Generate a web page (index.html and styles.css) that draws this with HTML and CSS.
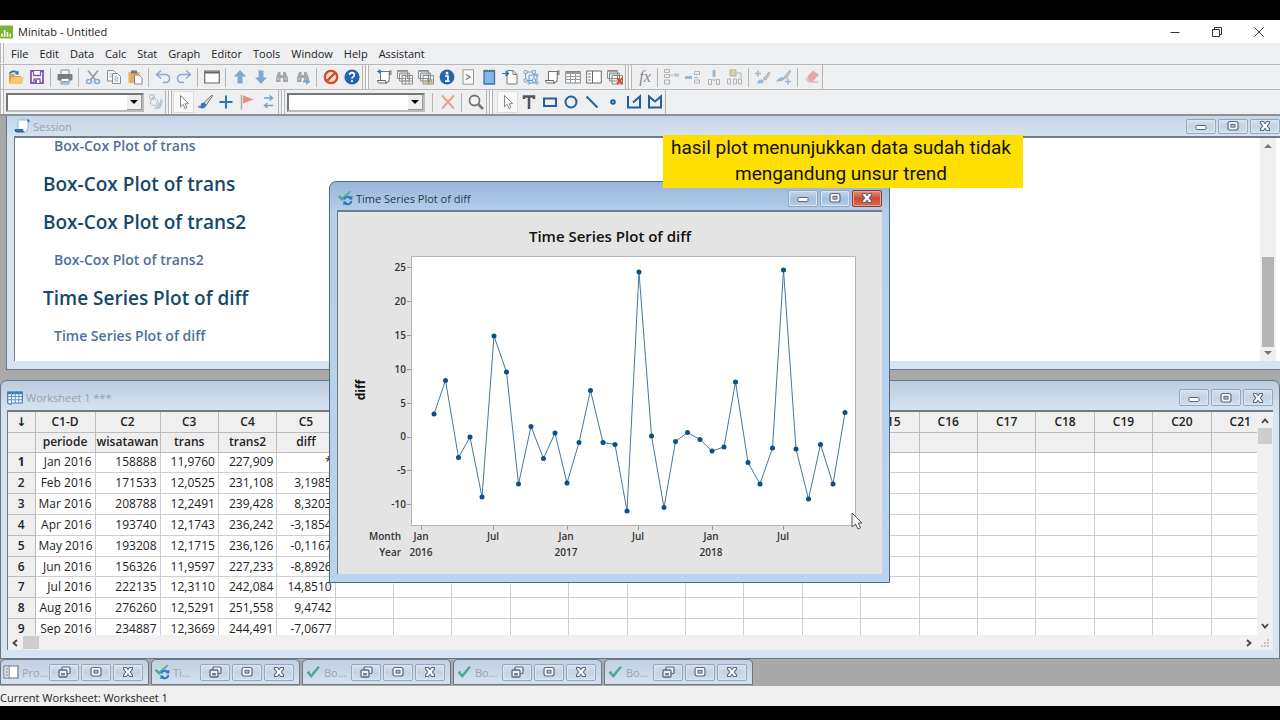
FILE: index.html
```html
<!DOCTYPE html>
<html lang="en">
  <head>
    <meta charset="UTF-8" />
    <meta name="viewport" content="width=device-width, initial-scale=1.0" />
    <title>Minitab - Untitled</title>
    <link rel="stylesheet" href="styles.css">
  </head>
  <body>
    <svg class="sprite" aria-hidden="true">
      <symbol id="i-min" viewBox="0 0 16 12"><rect x="3" y="5.500" width="10" height="4" rx="1" fill="#fff" stroke="#5c6779" /></symbol>
      <symbol id="i-max" viewBox="0 0 16 12"><rect x="3" y="1.500" width="10" height="8.500" rx="2" fill="#f4f7fb" stroke="#5c6779" stroke-width="1.200" /><rect x="6" y="4.300" width="4" height="2.800" fill="#b4bfcd" stroke="#5c6779" /></symbol>
      <symbol id="i-close" viewBox="0 0 16 12"><path d="M3.500 1.500h3L8 3.600l1.500-2.100h3v1.600L10.200 6l2.300 2.800v1.700h-3L8 8.200l-1.500 2.300h-3V8.800L5.800 6 3.500 3.100z" fill="#fff" stroke="#5c6779" stroke-width="1.100" stroke-linejoin="round" /></symbol>
      <symbol id="i-restore" viewBox="0 0 16 12"><rect x="6" y="1" width="8" height="6.500" rx="1" fill="#e9eff6" stroke="#5c6779" stroke-width="1.200" /><rect x="3" y="4" width="8" height="7" rx="1" fill="#e9eff6" stroke="#5c6779" stroke-width="1.300" /><path d="M5.500 7.500h3v1.500h-3z" fill="#8d99a9" stroke="#5c6779" stroke-width=".8" /></symbol>
      <symbol id="i-check" viewBox="0 0 16 16"><path d="M1.500 8.500 4 6.800l2 3.400L13 2l2 1.200L6.300 14z" fill="#4fa697" /></symbol>
      <symbol id="i-plot" viewBox="0 0 16 16"><path d="M.5 6.500 3 5l2 2.600L13 .8l1.200 1L5 11z" fill="#5aaa8e" /><path d="M7.200 9.500A4 4 0 0 1 14 8.200M14.500 11a4 4 0 0 1-6.800 2" fill="none" stroke="#2878c4" stroke-width="1.900" /><path d="m15.500 5.500-.3 4.200-3.800-.8zM6.300 15.200l.2-4.200 3.700 1.200z" fill="#2878c4" /></symbol>
      <symbol id="i-scroll" viewBox="0 0 16 16"><path d="M4 2.500h9V12H4z" fill="#fff" /><path d="M13.500 5.500V3q0-1.300 1.400-1.300V5.500zM4.500 11.500v-9h8.700v8.300q0 2.500-2.500 2.500" fill="none" stroke="#777" stroke-width="1.100" /><path d="M1.500 11.500h8q-.5 2.500 1.500 2.500H3.500q-2 0-2-2.500z" fill="#fff" stroke="#666" /></symbol>
      <symbol id="i-arrow" viewBox="0 0 16 16"><path d="M4.500 1.500v11.300l2.700-2.500 1.700 4.200 2-.8-1.800-4h3.500z" fill="#fff" stroke="#858585" /></symbol>
      <symbol id="i-glass" viewBox="0 0 16 16"><path d="M2 13V9l2-6h2.500v10zM9 13V3h2.500L14 9v4zM6.500 6H9v3H6.500z" fill="#a4a7aa" /><path d="M3 10h2M10.500 10h2" stroke="#ddd" /></symbol>
      <symbol id="i-sheets" viewBox="0 0 16 16"><g fill="#f5f5f5" stroke="#8b8b8b"><path d="M.5 1.500h10v8H.5zM2.500 4h10v8h-10zM5 6.500h10.500v8.500H5z" /></g><path d="M.5 2.500h10M2.500 5h10" stroke="#a5a5a5" /></symbol>
    </svg>

    <header class="app-title">
      <svg class="logo" viewBox="0 0 14 14"><rect width="14" height="14" rx="1" fill="#7cb337" /><path d="M2 9v3M5 5v7M8 7v5M11 9v3" stroke="#fff" stroke-width="1.800" /></svg>
      <h1>Minitab - Untitled</h1>
      <div class="app-controls">
        <button aria-label="Minimize"><svg viewBox="0 0 12 12"><path d="M1.500 6.500h9" /></svg></button>
        <button aria-label="Restore"><svg viewBox="0 0 12 12"><path d="M1.500 3.500h7v7h-7zM3.500 3.500v-2h7v7h-2" /></svg></button>
        <button aria-label="Close"><svg viewBox="0 0 12 12"><path d="m1.500 1.500 9 9m0-9-9 9" /></svg></button>
      </div>
    </header>

    <nav class="menubar" aria-label="Main menu">
      <span class="grip"></span>
      <button>File</button>
      <button>Edit</button>
      <button>Data</button>
      <button>Calc</button>
      <button>Stat</button>
      <button>Graph</button>
      <button>Editor</button>
      <button>Tools</button>
      <button>Window</button>
      <button>Help</button>
      <button>Assistant</button>
    </nav>

    <div class="toolbars">
      <div class="toolbar" role="toolbar" aria-label="Standard">
        <span class="grip"></span>
        <button aria-label="Open"><svg viewBox="0 0 16 16"><path d="M1 14V5h5l1 2h6v7z" fill="#dba24c" /><path d="m1 15 3-7h12l-2 7z" fill="#f7c777" /><path d="M1.500 4.500Q5 .5 9 3.500" fill="none" stroke="#3175ae" stroke-width="1.800" /><path d="m10.500 1.500.2 4.200-4-.8z" fill="#3175ae" /></svg></button>
        <button aria-label="Save"><svg viewBox="0 0 16 16"><path d="M2 2h12v12H2z" fill="#fff" stroke="#8058a8" stroke-width="1.800" /><path d="M4.500 2v4.500h7V2M5 14v-4h6v4" fill="#fff" stroke="#8058a8" stroke-width="1.300" /><path d="M6 11h2v3H6z" fill="#8058a8" /></svg></button>
        <span class="sep"></span>
        <button aria-label="Print"><svg viewBox="0 0 16 16"><path d="M4 5V1h8v4" fill="#f9f9f9" stroke="#888" /><rect x=".5" y="5" width="15" height="6.500" rx="1" fill="#777c83" /><path d="M4 9.500h8V15H4z" fill="#fff" stroke="#888" /><path d="M5 13h6M12 7h2" stroke="#4d91cf" stroke-width="1.500" /></svg></button>
        <span class="sep"></span>
        <button aria-label="Cut"><svg viewBox="0 0 16 16"><path d="m3 1.500 7.500 9.500M13 1.500 5.500 11" stroke="#9a9da2" stroke-width="1.700" /><g fill="none" stroke="#88abcf" stroke-width="1.600"><ellipse cx="4" cy="12.500" rx="2.500" ry="2" /><ellipse cx="12" cy="12.500" rx="2.500" ry="2" /></g></svg></button>
        <button aria-label="Copy"><svg viewBox="0 0 16 16"><path d="M1.500 1.500h6l2 2V12h-8z" fill="#f8f8f8" stroke="#929292" /><path d="M3.500 5h3M3.500 7.500h2" stroke="#91b3d7" /><path d="M6.500 4.500h5l3 3v7h-8z" fill="#fff" stroke="#8a8d92" /><path d="M8.500 8h4M8.500 10h4M8.500 12h4" stroke="#7fa8d3" /></svg></button>
        <button aria-label="Paste"><svg viewBox="0 0 16 16"><path d="M1.500 3h11v11h-11z" fill="#e8ae5b" /><path d="M4 1.500h6v3H4z" fill="#777" /><path d="M7.500 6h4.500l3 3v6H7.500z" fill="#fff" stroke="#858585" /></svg></button>
        <span class="sep"></span>
        <button aria-label="Undo"><svg viewBox="0 0 16 16"><path d="M6 1.500 1.500 5.500 6 9.500M2 5.500h8q4.500 0 4.500 4t-4.500 4H8" fill="none" stroke="#88acd3" stroke-width="1.500" /></svg></button>
        <button aria-label="Redo"><svg viewBox="0 0 16 16"><path d="m10 1.500 4.500 4-4.500 4M14 5.500H6q-4.500 0-4.500 4t4.500 4h2" fill="none" stroke="#88acd3" stroke-width="1.500" /></svg></button>
        <span class="sep"></span>
        <button aria-label="Show dialog"><svg viewBox="0 0 16 16"><path d="M.7 2h14.600v12H.7z" fill="#fdfdfd" stroke="#666" stroke-width="1.200" /><path d="M1 3.500h14" stroke="#666" stroke-width="2" /></svg></button>
        <span class="sep"></span>
        <button aria-label="Previous command"><svg viewBox="0 0 16 16"><path d="M8 1 2 7.500h3.500v7h5v-7H14z" fill="#7da7d4" /></svg></button>
        <button aria-label="Next command"><svg viewBox="0 0 16 16"><path d="m8 15 6-6.500h-3.500v-7h-5v7H2z" fill="#7da7d4" /></svg></button>
        <button aria-label="Find"><svg><use href="#i-glass" /></svg></button>
        <button aria-label="Find next"><svg viewBox="0 0 16 16"><use href="#i-glass" /><path d="M8 11.500h3V9l4.500 3.500L11 16v-2.500H8z" fill="#7ea6ce" /></svg></button>
        <span class="sep"></span>
        <button aria-label="Cancel"><svg viewBox="0 0 16 16"><circle cx="8" cy="8" r="6.200" fill="#f9ded5" stroke="#d94a28" stroke-width="2.300" /><path d="m3.600 12.400 8.800-8.800" stroke="#d94a28" stroke-width="2.200" /></svg></button>
        <button aria-label="Help"><svg viewBox="0 0 16 16"><circle cx="8" cy="8" r="7.600" fill="#2466a9" /><path d="M5.600 6q0-2.400 2.400-2.400T10.400 6q0 1.200-1.400 1.900Q8 8.400 8 9.700" fill="none" stroke="#fff" stroke-width="1.600" /><circle cx="8" cy="12" r="1.100" fill="#fff" /></svg></button>
      </div>
      <div class="toolbar" role="toolbar" aria-label="Project manager">
        <span class="grip"></span>
        <button aria-label="Show session folder"><svg viewBox="0 0 16 16"><use href="#i-scroll" /><path d="M1 2.500h3M3 .8 5.200 2.500 3 4.200z" fill="#2872b5" stroke="#2872b5" /></svg></button>
        <button aria-label="Show worksheets folder"><svg viewBox="0 0 16 16"><use href="#i-sheets" /><path d="M5 9.500h10.500M5 12h10.500M8.500 6.500V15M12 6.500V15" stroke="#9b9b9b" /></svg></button>
        <button aria-label="Show graphs folder"><svg viewBox="0 0 16 16"><use href="#i-sheets" /><path d="M7.500 14.500V11M13.500 14.500V10" stroke="#e0a43c" stroke-width="2" /><path d="M10.500 14.500V8.500" stroke="#4f91cd" stroke-width="2" /></svg></button>
        <button aria-label="Show info"><svg viewBox="0 0 16 16"><circle cx="8" cy="8" r="7.400" fill="#2466a9" /><circle cx="8" cy="4.200" r="1.400" fill="#fff" /><path d="M6 7h3v5M6 12.200h4.500" fill="none" stroke="#fff" stroke-width="1.700" /></svg></button>
        <button aria-label="Show history"><svg viewBox="0 0 16 16"><path d="M3 .8h10.500v14.400H3z" fill="#f8f8f8" stroke="#979797" /><path d="m6 5.500 4 2.500-4 2.500" fill="none" stroke="#777" stroke-width="1.200" /></svg></button>
        <button aria-label="Show report pad"><svg viewBox="0 0 16 16"><path d="M3 2h10.500v13H3z" fill="#80b6ea" stroke="#3972a8" stroke-width="1.300" /><path d="M3 1.800h11" stroke="#5d6873" stroke-width="2" stroke-dasharray="1.500 1" /></svg></button>
        <button aria-label="Related documents"><svg viewBox="0 0 16 16"><path d="M5 1.500h6l4 4v9.500H5z" fill="#fff" stroke="#777" /><path d="M11 1.500v4h4" fill="none" stroke="#777" /><path d="M0 4.500h4M4 2l3 2.500L4 7z" fill="#2872b5" stroke="#2872b5" /></svg></button>
        <button aria-label="Show design"><svg viewBox="0 0 16 16"><path d="M2.500 3h8.500v8.500H2.500zM6 6h8v8H6z" fill="none" stroke="#6d9cc9" /><path d="M1 1.500h3v3H1zM9.500 1.500h3v3h-3zM1 10h3v3H1zM9.500 10h3v3h-3zM13 5h2v2h-2zM13 13h2v2h-2zM5 13h2v2H5z" fill="#e5eef7" stroke="#7b9cbc" stroke-width=".8" /></svg></button>
        <button aria-label="Session window"><svg><use href="#i-scroll" /></svg></button>
        <button aria-label="Current data window"><svg viewBox="0 0 16 16"><path d="M.7 2.500h14.600v11.500H.7z" fill="#fff" stroke="#858585" /><path d="M.7 4h14.600" stroke="#999" stroke-width="2" /><path d="M.7 7.500h14.600M.7 10.500h14.600M5.500 3v11M10.500 3v11" stroke="#999" /></svg></button>
        <button aria-label="Project manager"><svg viewBox="0 0 16 16"><path d="M.7 2h14.600v12H.7zM6.500 2v12" fill="#fff" stroke="#666" /><path d="M2.500 5h2M2.500 8h2M2.500 11h2" stroke="#888" stroke-width="1.500" /></svg></button>
        <button aria-label="Close all graphs"><svg viewBox="0 0 16 16"><use href="#i-sheets" /><path d="m10 9 5.500 6m0-6L10 15" stroke="#d7472d" stroke-width="1.900" /></svg></button>
      </div>
      <div class="toolbar" role="toolbar" aria-label="Worksheet">
        <span class="grip"></span>
        <button class="fx" aria-label="Assign formula">fx</button>
        <span class="sep"></span>
        <button class="off" aria-label="Insert cells"><svg viewBox="0 0 16 16"><path d="M.5.500h5v3h-5zM.5 5.500h5v3h-5zM.5 11h5v4h-5z" fill="#eee" stroke="#777" /><path d="M6 6h3" stroke="#5b89b4" /><path d="M10 4.500h5v3h-5z" fill="#999" /></svg></button>
        <button class="off" aria-label="Insert rows"><svg viewBox="0 0 16 16"><path d="M0 7h7v3H0z" fill="#4685bb" /><path d="M9.500 2.500h5v3h-5zM9.500 11h5v3h-5zM9 8.500h4" fill="#eee" stroke="#777" /></svg></button>
        <button class="off" aria-label="Insert columns"><svg viewBox="0 0 16 16"><path d="M6.500 1h3v7h-3z" fill="#4685bb" /><path d="M2.500 10.500h3v5h-3zM10.500 10.500h3v5h-3zM6.500 9.500 8 12l1.500-2.500" fill="#eee" stroke="#777" /></svg></button>
        <button class="off" aria-label="Move columns"><svg viewBox="0 0 16 16"><path d="M3 1h6v6H3z" fill="#c8b34e" stroke="#777" /><path d="M.5 10h3v5h-3zM6.500 10h3v5h-3zM11.500 10h3v5h-3zM10 4h4v5" fill="none" stroke="#777" /></svg></button>
        <span class="sep"></span>
        <button class="off" aria-label="Previous brush group"><svg viewBox="0 0 16 16"><path d="m8 10 6-7 1 1-4 7z" fill="#999" stroke="#777" /><path d="M2 14.500q1-4.500 5-4l2 1.500q0 3-7 2.500z" fill="#4685bb" /><path d="M0 4.500h6M3 1.500v6" stroke="#4685bb" stroke-width="1.500" /></svg></button>
        <button class="off" aria-label="Next brush group"><svg viewBox="0 0 16 16"><path d="m8 8 6-7 1 1-5 8z" fill="#999" stroke="#777" /><path d="M0 12.500q3-4.500 7-4.500l2 2q-3 3-9 2.500z" fill="#4685bb" /><path d="M9 12.500h6M12 9.500v6" stroke="#4685bb" stroke-width="1.500" /></svg></button>
        <span class="sep"></span>
        <button class="off" aria-label="Clear cells"><svg viewBox="0 0 16 16"><path d="m3 8 6-6.500 6 4L9 12H5z" fill="#e45d68" /><path d="m1.500 9.500 4 3.500H14" fill="none" stroke="#e17b82" stroke-width="1.500" /></svg></button>
      </div>
    </div>

    <div class="toolbars">
      <div class="toolbar" role="toolbar" aria-label="Graph editing">
        <span class="grip"></span>
        <label class="combo"><select aria-label="Graph item"><option></option></select><svg viewBox="0 0 8 4"><path d="M0 0h8L4 4z" /></svg></label>
        <button class="off" aria-label="Edit attributes"><svg viewBox="0 0 16 16"><path d="m6 3 5 4-3 5.500L3 9z" fill="#f2f2f2" stroke="#888" /><circle cx="5" cy="3" r="2.500" fill="none" stroke="#888" /><path d="M11 9q3 0 2-4l2.500 1q.5 7-4 9H6q4-1 5-6z" fill="#7fa6c8" /></svg></button>
      </div>
      <div class="toolbar" role="toolbar" aria-label="Selection">
        <span class="grip short"></span>
        <button class="pressed" aria-label="Select"><svg><use href="#i-arrow" /></svg></button>
        <button aria-label="Brush"><svg viewBox="0 0 16 16"><path d="M6.500 9 15 1l.5 1L9 11.500z" fill="#d7dce1" stroke="#777" /><path d="M1 13q3 0 3-3.500L7 8.500 9.500 11 8 13.500q-3 2-7-.5z" fill="#2e79bd" /><path d="m0 13 3-1.500.5 2z" fill="#e26a3d" /></svg></button>
        <button aria-label="Crosshairs"><svg viewBox="0 0 16 16"><path d="M8 1.500v13M1.500 8h13" stroke="#2a74b8" stroke-width="2" /></svg></button>
        <button aria-label="Plant flag"><svg viewBox="0 0 16 16"><path d="M2.500 1v14.500" stroke="#aaa" stroke-width="1.500" /><path d="m4 1.500 10.500 4L4 9.500z" fill="#e99083" /></svg></button>
        <button aria-label="Update"><svg viewBox="0 0 16 16"><g fill="none" stroke="#78a3cc" stroke-width="1.500"><path d="M4 4h8M9.500 1.500 12.500 4l-3 2.500M13 11.500H5M7.500 9l-3 2.500 3 2.500" /></g></svg></button>
      </div>
      <div class="toolbar" role="toolbar" aria-label="Annotation list">
        <span class="grip short"></span>
        <label class="combo"><select aria-label="Annotation item"><option></option></select><svg viewBox="0 0 8 4"><path d="M0 0h8L4 4z" /></svg></label>
        <span class="sep wide"></span>
        <button aria-label="Delete"><svg viewBox="0 0 16 16"><path d="m2 1.500 12 13m0-13-12 13" stroke="#eea08f" stroke-width="1.900" /></svg></button>
        <span class="sep"></span>
        <button aria-label="Zoom"><svg viewBox="0 0 16 16"><circle cx="6.500" cy="6.500" r="5" fill="#f4f4f4" stroke="#777" stroke-width="1.800" /><path d="m10 10 5 5" stroke="#777" stroke-width="2.600" /></svg></button>
      </div>
      <div class="toolbar" role="toolbar" aria-label="Graph annotation">
        <span class="grip"></span>
        <button class="pressed" aria-label="Select annotation"><svg><use href="#i-arrow" /></svg></button>
        <button class="tool" aria-label="Text"><svg viewBox="0 0 16 16"><path d="M3 5V2.500h10V5M8 3v12" stroke="#555" stroke-width="2.500" /></svg></button>
        <button class="tool" aria-label="Rectangle"><svg viewBox="0 0 16 16"><path d="M2 4.500h12v7.500H2z" /></svg></button>
        <button class="tool" aria-label="Ellipse"><svg viewBox="0 0 16 16"><circle cx="8" cy="8" r="5.500" /></svg></button>
        <button class="tool" aria-label="Line"><svg viewBox="0 0 16 16"><path d="m2.500 2.500 11 11" /></svg></button>
        <button class="tool" aria-label="Marker"><svg viewBox="0 0 16 16"><circle cx="8" cy="8" r="1.800" /></svg></button>
        <button class="tool" aria-label="Polyline"><svg viewBox="0 0 16 16"><path d="M2 2v11.500h12V2.500L7 8.500" /></svg></button>
        <button class="tool" aria-label="Polygon"><svg viewBox="0 0 16 16"><path d="M2 2.500v11h12v-11L8 7.500z" /></svg></button>
      </div>
    </div>

    <main class="mdi">
      <section class="window session">
        <div class="caption">
          <svg class="win-icon" viewBox="0 0 16 16"><path d="M4 2h10v8l-2 4H4z" fill="#fff" stroke="#97b9d8" /><path d="M.5 11h8.500q0 2.500 2 3.500H3Q.5 14.500.5 11zM13.500 1.500q2.500-1 2 2.500h-2z" fill="#326d9f" /></svg>
          <h2>Session</h2>
          <div class="win-controls">
            <button aria-label="Minimize"><svg><use href="#i-min" /></svg></button>
            <button aria-label="Maximize"><svg><use href="#i-max" /></svg></button>
            <button aria-label="Close"><svg><use href="#i-close" /></svg></button>
          </div>
        </div>
        <div class="session-body">
          <div class="output">
            <h4>Box-Cox Plot of trans</h4>
            <h3>Box-Cox Plot of trans</h3>
            <h3>Box-Cox Plot of trans2</h3>
            <h4>Box-Cox Plot of trans2</h4>
            <h3>Time Series Plot of diff</h3>
            <h4>Time Series Plot of diff</h4>
          </div>
          <div class="scroll-v session-scroll">
            <svg viewBox="0 0 8 4"><path d="M0 4h8L4 0z" /></svg>
            <span class="thumb"></span>
            <svg viewBox="0 0 8 4"><path d="M0 0h8L4 4z" /></svg>
          </div>
        </div>
      </section>

      <section class="window worksheet">
        <div class="caption">
          <svg class="win-icon" viewBox="0 0 16 16"><path d="M.7 2h14.600v11H4.500L3.500 14.500.7 13z" fill="#fff" stroke="#3d7ab2" stroke-width="1.200" /><path d="M.7 3h14.600" stroke="#3d7ab2" stroke-width="2.500" /><path d="M.7 6.500h14.600M.7 9.800h14.600M4.500 2v12M8.200 2v11M11.800 2v11" stroke="#5b91c2" /></svg>
          <h2>Worksheet 1 ***</h2>
          <div class="win-controls">
            <button aria-label="Minimize"><svg><use href="#i-min" /></svg></button>
            <button aria-label="Maximize"><svg><use href="#i-max" /></svg></button>
            <button aria-label="Close"><svg><use href="#i-close" /></svg></button>
          </div>
        </div>
        <div class="sheet">
          <div class="sheet-view">
            <table>
              <colgroup>
                <col class="col-num" />
                <col class="col-date" />
                <col class="col-wide" />
              </colgroup>
              <thead></thead>
              <tbody></tbody>
            </table>
          </div>
          <div class="scroll-v">
            <svg class="chev" viewBox="0 0 8 6"><path d="m1 5 3-3.500L7 5" /></svg>
            <span class="thumb"></span>
            <svg class="chev" viewBox="0 0 8 6"><path d="m1 1 3 3.500L7 1" /></svg>
          </div>
          <div class="scroll-h">
            <svg class="chev" viewBox="0 0 6 8"><path d="M5 1 1.500 4 5 7" /></svg>
            <span class="thumb"></span>
            <svg class="chev" viewBox="0 0 6 8"><path d="m1 1 3.500 3L1 7" /></svg>
          </div>
          <svg class="resizer" viewBox="0 0 10 10"><path d="M7 1h2v2H7zM4 4h2v2H4zM7 4h2v2H7zM1 7h2v2H1zM4 7h2v2H4zM7 7h2v2H7z" /></svg>
        </div>
      </section>

      <div class="minimized">
        <div class="mini">
          <svg class="win-icon" viewBox="0 0 16 16"><path d="M1 2h14v12H1zM6 2v12" fill="#fff" stroke="#777" stroke-width="1.200" /><path d="M1.500 3h4v10h-4z" fill="#d9dee4" /><path d="M3 5h2M3 8h2M3 11h2" stroke="#888" /></svg>
          <span>Pro...</span>
          <div class="win-controls">
            <button aria-label="Restore"><svg><use href="#i-restore" /></svg></button>
            <button aria-label="Maximize"><svg><use href="#i-max" /></svg></button>
            <button aria-label="Close"><svg><use href="#i-close" /></svg></button>
          </div>
        </div>
        <div class="mini">
          <svg class="win-icon"><use href="#i-plot" /></svg>
          <span>Ti...</span>
          <div class="win-controls">
            <button aria-label="Restore"><svg><use href="#i-restore" /></svg></button>
            <button aria-label="Maximize"><svg><use href="#i-max" /></svg></button>
            <button aria-label="Close"><svg><use href="#i-close" /></svg></button>
          </div>
        </div>
        <div class="mini">
          <svg class="win-icon"><use href="#i-check" /></svg>
          <span>Bo...</span>
          <div class="win-controls">
            <button aria-label="Restore"><svg><use href="#i-restore" /></svg></button>
            <button aria-label="Maximize"><svg><use href="#i-max" /></svg></button>
            <button aria-label="Close"><svg><use href="#i-close" /></svg></button>
          </div>
        </div>
        <div class="mini">
          <svg class="win-icon"><use href="#i-check" /></svg>
          <span>Bo...</span>
          <div class="win-controls">
            <button aria-label="Restore"><svg><use href="#i-restore" /></svg></button>
            <button aria-label="Maximize"><svg><use href="#i-max" /></svg></button>
            <button aria-label="Close"><svg><use href="#i-close" /></svg></button>
          </div>
        </div>
        <div class="mini">
          <svg class="win-icon"><use href="#i-check" /></svg>
          <span>Bo...</span>
          <div class="win-controls">
            <button aria-label="Restore"><svg><use href="#i-restore" /></svg></button>
            <button aria-label="Maximize"><svg><use href="#i-max" /></svg></button>
            <button aria-label="Close"><svg><use href="#i-close" /></svg></button>
          </div>
        </div>
      </div>

      <section class="window plot">
        <div class="caption">
          <svg class="win-icon"><use href="#i-plot" /></svg>
          <h2>Time Series Plot of diff</h2>
          <div class="win-controls">
            <button aria-label="Minimize"><svg><use href="#i-min" /></svg></button>
            <button aria-label="Maximize"><svg><use href="#i-max" /></svg></button>
            <button class="danger" aria-label="Close"><svg><use href="#i-close" /></svg></button>
          </div>
        </div>
        <svg class="chart" viewBox="338 212 544 362" role="img" aria-label="Time Series Plot of diff">
          <defs>
            <marker id="dot" markerWidth="6" markerHeight="6" refX="3" refY="3" markerUnits="userSpaceOnUse"><circle cx="3" cy="3" r="2.500" fill="#0b4f8d" /></marker>
          </defs>
          <text class="chart-title" x="610" y="242">Time Series Plot of diff</text>
          <rect x="411.500" y="256.500" width="444" height="269" fill="#fff" stroke="#b4b4b4" />
          <path class="ticks" d="M407 267.500h4M407 301.500h4M407 335.500h4M407 369.500h4M407 403.500h4M407 437.500h4M407 470.500h4M407 504.500h4M421.500 526v4M493.500 526v4M567.500 526v4M638.500 526v4M712.500 526v4M783.500 526v4" />
          <g class="y-labels">
            <text x="406" y="271">25</text>
            <text x="406" y="305">20</text>
            <text x="406" y="339">15</text>
            <text x="406" y="373">10</text>
            <text x="406" y="407">5</text>
            <text x="406" y="440">0</text>
            <text x="406" y="474">-5</text>
            <text x="406" y="508">-10</text>
            <text x="401" y="540">Month</text>
            <text x="401" y="556">Year</text>
          </g>
          <g class="x-labels">
            <text x="421" y="540">Jan</text>
            <text x="493" y="540">Jul</text>
            <text x="566" y="540">Jan</text>
            <text x="638" y="540">Jul</text>
            <text x="711" y="540">Jan</text>
            <text x="783" y="540">Jul</text>
            <text x="421" y="556">2016</text>
            <text x="566" y="556">2017</text>
            <text x="711" y="556">2018</text>
          </g>
          <text class="y-title" transform="translate(365 390) rotate(-90)">diff</text>
          <polyline points="434,414 445.500,380.500 458.500,457.500 470,437 482,497 494,336 506.500,372 518.500,484 531,426.500 543.500,458.500 555,433 567,483 579,442.500 590.500,390.500 603,442.500 615,444.500 627,511 639,272 651.500,436 664,507.500 675.500,441.500 687.500,432.500 700,439.500 712,451 724,447 735.500,382 748,462.500 760,484 772.500,448 783.500,270 796,449 808.500,499 820.500,444.500 833,484 845,412.500" />
        </svg>
        <svg class="cursor" viewBox="0 0 12 18"><path d="M1 1v14l3.500-3L7 17l2.500-1.200L7.300 11H11z" fill="#fff" stroke="#555" /></svg>
      </section>
    </main>

    <footer class="status">Current Worksheet: Worksheet 1</footer>

    <p class="subtitle">hasil plot menunjukkan data sudah tidak mengandung unsur trend</p>

    <script src="sheet.js"></script>
  </body>
</html>
```
FILE: styles.css
```css
* {
  box-sizing: border-box;
}

body {
  margin: 0;
  height: 100vh;
  padding: 20px 0 14px;
  display: flex;
  flex-direction: column;
  position: relative;
  overflow: hidden;
  background: #000;
  color: #222;
  font: 11px "Open Sans", "Noto Sans", sans-serif;
}

h1,
h2,
h3,
h4,
p {
  margin: 0;
  font-weight: 400;
}

button {
  margin: 0;
  padding: 0;
  border: 0;
  background: none;
  color: inherit;
  font: inherit;
}

svg {
  display: block;
}

.sprite {
  position: absolute;
  width: 0;
  height: 0;
}

/* application frame */

.app-title {
  display: flex;
  align-items: center;
  height: 23px;
  flex: none;
  background: #fff;
}

.app-title h1 {
  flex: 1;
  font-size: 11px;
}

.logo {
  width: 13px;
  height: 14px;
  margin-right: 5px;
}

.app-controls {
  display: flex;
}

.app-controls button {
  display: grid;
  place-items: center;
  width: 42px;
  height: 20px;
}

.app-controls svg {
  width: 12px;
  height: 12px;
  fill: none;
  stroke: #333;
}

.menubar {
  display: flex;
  align-items: center;
  height: 21px;
  flex: none;
  padding-bottom: 1px;
  background: #eeeff1;
}

.menubar button {
  padding: 0 5px 0 6px;
}

.grip {
  flex: none;
  width: 10px;
  height: 100%;
  border: solid #eeeff1;
  border-width: 0 4px 0 2px;
  background: linear-gradient(90deg, #b5b5b5 1px, #f8f8f8 1px 3px, #b5b5b5 3px);
}

.menubar .grip,
.toolbar:first-child .grip {
  width: 5px;
  border-width: 0 1px 0 0;
}

.grip.short {
  width: 7px;
  border-width: 0 1px 0 2px;
}

.toolbars {
  display: flex;
  height: 25px;
  flex: none;
  border-top: 1px solid #b9b9bb;
  background: #eeeff1;
}

.toolbar {
  display: flex;
  align-items: center;
  border-right: 1px solid #b5b5b5;
}

.toolbar button {
  display: grid;
  place-items: center;
  flex: none;
  width: 21px;
  height: 22px;
}

.toolbar button svg {
  width: 16px;
  height: 16px;
}

.toolbar .pressed {
  background: #f8f8f8;
  border: 1px solid #ddd;
}

.toolbar .off {
  opacity: 0.5;
}

.toolbar .fx {
  width: 18px;
  color: #888;
  font: italic 16px "Liberation Serif", serif;
}

.tool svg {
  fill: none;
  stroke: #235f9b;
  stroke-width: 2;
}

.sep {
  width: 7px;
  height: 19px;
  border: solid #eeeff1;
  border-width: 0 3px;
  background: #b5b5b5;
}

.sep.wide {
  width: 12px;
  border-width: 0 4px 0 7px;
}

.combo {
  display: grid;
  grid-template-columns: 1fr 15px;
  align-items: center;
  width: 138px;
  height: 19px;
  margin-left: 1px;
  border: 2px solid #777;
  border-right-color: #bbb;
  border-bottom-color: #bbb;
  background: #fff;
}

.combo select {
  grid-area: 1 / 1 / 2 / 3;
  width: 100%;
  height: 100%;
  border: 0;
  background: transparent;
  appearance: none;
}

.combo svg {
  grid-area: 1 / 2;
  width: 15px;
  height: 15px;
  padding: 5px 3px;
  border: 1px solid #999;
  border-width: 0 1px 1px 0;
  background: #eee;
  pointer-events: none;
}

/* MDI area */

.mdi {
  flex: 1;
  min-height: 0;
  display: flex;
  flex-direction: column;
  position: relative;
  overflow: hidden;
  border-top: 2px solid #8e9196;
  background: #a9a9a9;
}

.window {
  display: flex;
  flex-direction: column;
  padding: 0 7px 8px;
  border: 1px solid #687785;
  border-radius: 7px 7px 0 0;
  background: #d7e3ef;
}

.caption {
  display: flex;
  align-items: center;
  flex: none;
  height: 30px;
  color: #97a1ab;
}

.caption h2 {
  flex: 1;
  font-size: 11px;
}

.win-icon {
  flex: none;
  width: 16px;
  height: 16px;
  margin-right: 3px;
}

.win-controls {
  display: flex;
  gap: 2px;
}

.win-controls button {
  display: grid;
  place-items: center;
  width: 30px;
  height: 17px;
  border: 1px solid #93a7bf;
  border-radius: 2px;
  background: linear-gradient(#d3e0ee, #c3d3e4 50%, #d2dfec);
  box-shadow: inset 0 0 0 1px #dbe6f1;
}

.win-controls svg {
  width: 16px;
  height: 12px;
}

.session {
  flex: 1;
  min-height: 0;
  margin: 0 -8px 10px 6px;
  border-radius: 0;
  border-top: 0;
  background: linear-gradient(#c3d5e8, #d7e3ef 22px);
}

.session .caption {
  height: 20px;
}

.session .win-controls button {
  height: 15px;
}

.session-body {
  display: flex;
  flex: 1;
  min-height: 0;
  border: solid #717b87;
  border-width: 2px 0 0 1px;
  background: #fff;
}

.output {
  flex: 1;
  display: flex;
  flex-direction: column;
  justify-content: flex-end;
  overflow: hidden;
  padding: 0 28px 6px;
  line-height: 38px;
}

.output h3 {
  flex: none;
  color: #164869;
  font-size: 19px;
  font-weight: 600;
}

.output h4 {
  flex: none;
  padding-left: 11px;
  color: #4e6f9f;
  font-size: 14px;
  font-weight: 600;
}

.scroll-v {
  display: flex;
  flex-direction: column;
  align-items: center;
  justify-content: space-between;
  width: 16px;
  padding: 6px 0;
  background: #f0f0f0;
}

.scroll-v svg {
  width: 8px;
  height: 4px;
  fill: #777;
}

.scroll-v svg.chev {
  height: 6px;
}

.chev path {
  fill: none;
  stroke: #444;
  stroke-width: 1.8;
}

.scroll-v .thumb {
  width: 14px;
  height: 16px;
  margin: 4px 0 auto;
  background: #cdcdcd;
}

.session-scroll {
  margin-right: 4px;
}

.session-scroll .thumb {
  width: 12px;
  height: 90px;
  margin: auto 0 4px;
  background: #b4b4b4;
}

.worksheet {
  flex: none;
  padding: 0 6px 8px;
  background: linear-gradient(#bccde0, #d7e3ef 30px);
}

.worksheet .caption {
  height: 29px;
  padding-top: 4px;
}

.sheet {
  display: grid;
  grid-template-columns: 1fr 16px;
  grid-template-rows: 223px 15px;
  border: solid #717b87;
  border-width: 2px 0 0 1px;
  background: #f0f0f0;
}

.sheet-view {
  overflow: hidden;
  background: #fff;
}

.sheet table {
  width: calc(100% + 13px);
  height: 228px;
  table-layout: fixed;
  border-collapse: collapse;
  font-size: 12px;
  line-height: 16px;
}

.sheet tr {
  height: 20px;
}

.col-num {
  width: 27px;
}

.col-date {
  width: 60px;
}

.col-wide {
  width: 65px;
}

.sheet th,
.sheet td {
  padding: 0 3px;
  border: solid #cfcfcf;
  border-width: 0 1px 1px 0;
  text-align: right;
  white-space: nowrap;
}

.sheet th {
  padding: 0;
  background: #efeff0;
  border-color: #bbb;
  text-align: center;
  font-weight: 600;
}

.sheet tr:first-child th:first-child {
  font-family: "Open Sans", "DejaVu Sans", sans-serif;
  font-weight: 700;
}

.scroll-h {
  display: flex;
  align-items: center;
  padding: 0 5px 0 4px;
}

.scroll-h svg {
  width: 6px;
  height: 8px;
}

.scroll-h .thumb {
  width: 16px;
  height: 13px;
  margin: 0 auto 0 5px;
  background: #cdcdcd;
}

.resizer {
  width: 10px;
  height: 10px;
  margin: auto;
  fill: #cbc3c3;
}

.minimized {
  display: flex;
  flex: none;
  gap: 2px;
  padding-bottom: 1px;
}

.mini {
  display: flex;
  align-items: center;
  width: 149px;
  height: 26px;
  padding: 0 5px 0 2px;
  border: 1px solid #687785;
  border-radius: 5px 5px 0 0;
  background: linear-gradient(#bfd0e2, #d5e1ed);
  color: #98a3ae;
}

.mini span {
  flex: 1;
  white-space: nowrap;
}

/* graph window floating over the other two */

.plot {
  position: absolute;
  left: 329px;
  top: 65px;
  width: 561px;
  height: 402px;
  border-color: #4d6d83;
  background: linear-gradient(#98b6dc, #b5cfea 30px, #b9d4ee);
}

.plot .caption {
  height: 28px;
  padding-top: 4px;
  color: #2b3a4a;
}

.plot .win-controls button {
  background: linear-gradient(#c4d7ed, #a4c0e0 50%, #b4cdea);
}

.plot .win-controls .danger {
  border-color: #8b3b36;
  background: linear-gradient(#e0927f, #cd4a2c 50%, #db6c48);
  box-shadow: inset 0 0 0 1px #e4a292;
}

.chart {
  flex: 1;
  min-height: 0;
  border: 1px solid #697e92;
  border-width: 2px 0 0 1px;
  background: #e4e4e4;
  fill: #333;
  font-size: 10px;
  font-weight: 600;
}

.chart polyline {
  fill: none;
  stroke: #46779f;
  marker: url(#dot);
}

.ticks {
  stroke: #999;
}

.chart-title,
.y-title,
.x-labels {
  text-anchor: middle;
}

.chart-title {
  fill: #111;
  font-size: 15px;
}

.y-title {
  fill: #111;
  font-size: 12px;
  font-weight: 700;
}

.y-labels {
  text-anchor: end;
}

.cursor {
  position: absolute;
  left: 521px;
  top: 330px;
  width: 12px;
  height: 18px;
}

.status {
  height: 20px;
  flex: none;
  padding-top: 4px;
  background: #efeff0;
  line-height: 16px;
}

.subtitle {
  position: absolute;
  left: 663px;
  top: 135px;
  width: 360px;
  padding: 0 8px 1px 4px;
  background: #ffdf00;
  color: #111;
  font-family: Roboto, sans-serif;
  font-size: 19px;
  line-height: 26px;
  text-align: center;
}
```
FILE: sheet.js
```js
const names = ["periode", "wisatawan", "trans", "trans2", "diff"];
const rows = [
  ["Jan 2016", "158888", "11,9760", "227,909", "*"],
  ["Feb 2016", "171533", "12,0525", "231,108", "3,1985"],
  ["Mar 2016", "208788", "12,2491", "239,428", "8,3203"],
  ["Apr 2016", "193740", "12,1743", "236,242", "-3,1854"],
  ["May 2016", "193208", "12,1715", "236,126", "-0,1167"],
  ["Jun 2016", "156326", "11,9597", "227,233", "-8,8926"],
  ["Jul 2016", "222135", "12,3110", "242,084", "14,8510"],
  ["Aug 2016", "276260", "12,5291", "251,558", "9,4742"],
  ["Sep 2016", "234887", "12,3669", "244,491", "-7,0677"],
];
const columnCount = 21;

const addRow = function (section, tags, values) {
  const tr = document.createElement("tr");
  for (let i = 0; i <= columnCount; i++) {
    const cell = document.createElement(i === 0 ? "th" : tags);
    cell.textContent = values[i] || "";
    tr.appendChild(cell);
  }
  section.appendChild(tr);
};

const head = document.querySelector("thead");
const body = document.querySelector("tbody");

const ids = ["↓", "C1-D"];
for (let i = 2; i <= columnCount; i++) {
  ids.push("C" + i);
}

addRow(head, "th", ids);
addRow(head, "th", ["", ...names]);
rows.forEach((row, i) => addRow(body, "td", [String(i + 1), ...row]));
```
